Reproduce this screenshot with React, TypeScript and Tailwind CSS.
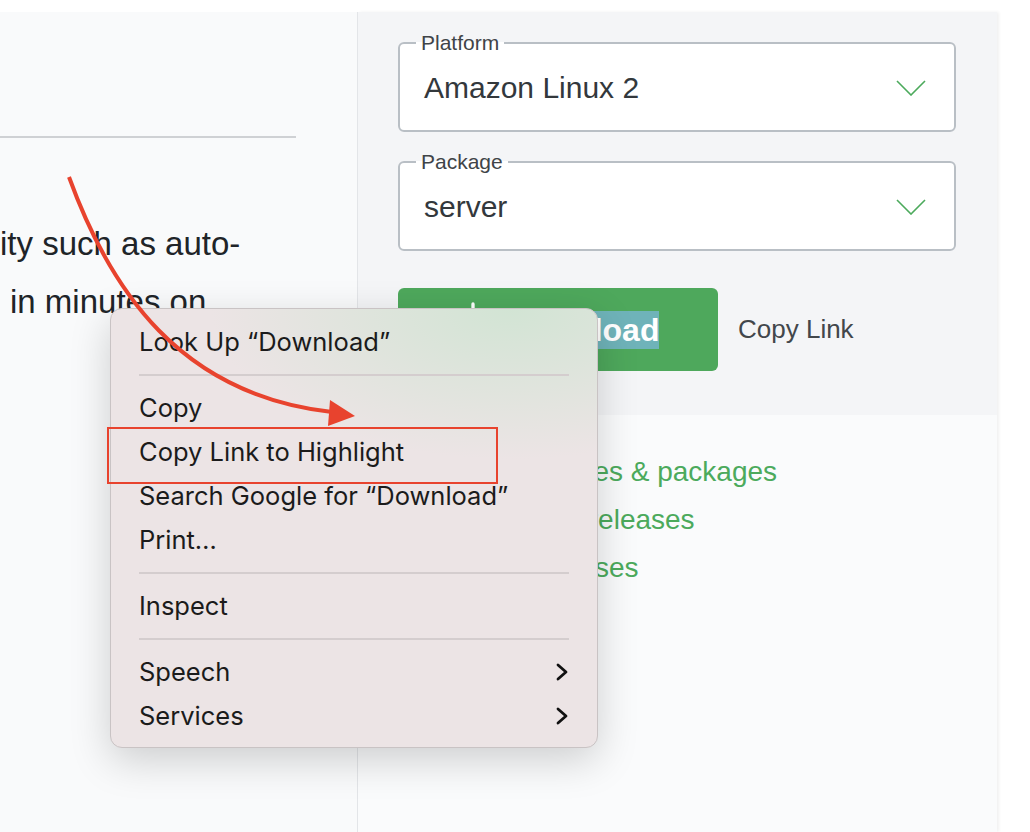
import { Download } from "lucide-react"

const sans = { fontFamily: '"Liberation Sans", Arial, sans-serif' }
const menuFont = { fontFamily: 'Inter, "Liberation Sans", sans-serif' }

function SelectBox({ label, value }: { label: string; value: string }) {
    return (
        <fieldset className="w-[558px] border-2 border-[#b9bfc5] rounded-[6px] bg-white px-[16px]">
            <legend className="px-[5px] text-[21px] leading-[21px] text-[#3f4448]">{label}</legend>
            <div className="h-[77px] flex items-center justify-between pb-[8px]">
                <span className="text-[30px] text-[#33383c] pl-[8px]">{value}</span>
                <svg width="30" height="16" viewBox="0 0 30 16" className="mr-[12px]">
                    <path d="M1 1 L15 15 L29 1" fill="none" stroke="#4caa5c" strokeWidth="1.6" />
                </svg>
            </div>
        </fieldset>
    )
}

function MenuItem({ text, sub }: { text: string; sub?: boolean }) {
    return (
        <div className="h-[44px] flex items-center justify-between px-[28px] text-[25.5px] text-[#1b1b1b]">
            <span>{text}</span>
            {sub && (
                <svg width="14" height="20" viewBox="0 0 14 20">
                    <path d="M3 3 L11 10 L3 17" fill="none" stroke="#111" strokeWidth="2.8" strokeLinecap="round" strokeLinejoin="round" />
                </svg>
            )}
        </div>
    )
}

const Sep = () => <div className="h-[22px] flex items-center px-[28px]"><div className="w-full h-[2px] bg-[#d4cdce]" /></div>

export default function App() {
    return (
        <main className="w-[1030px] h-[832px] bg-white pt-[12px] relative overflow-hidden" style={sans}>
            <div className="flex h-full">
                {/* left column */}
                <div className="w-[358px] h-full bg-[#f9fafb] border-r border-[#e3e5e8]">
                    <div className="h-[124px]" />
                    <div className="w-[296px] h-[2px] bg-[#cfd1d4]" />
                    <div className="pt-[77px] text-[33px] leading-[58px] text-[#202428]">
                        <p>ity such as auto-</p>
                        <p className="pl-[10px]">in minutes on</p>
                    </div>
                </div>

                {/* right column */}
                <div className="w-[639px] h-full flex flex-col shadow-[2px_0_3px_rgba(0,0,0,0.06)]">
                    <section className="bg-[#f4f5f7] pl-[40px] pt-[20px] pb-[44px] flex flex-col">
                        <SelectBox label="Platform" value="Amazon Linux 2" />
                        <div className="h-[19px]" />
                        <SelectBox label="Package" value="server" />
                        <div className="flex items-center mt-[37px]">
                            <button className="w-[320px] h-[83px] rounded-[6px] bg-[#4ea85c] text-white flex items-center justify-center gap-[12px] font-bold text-[32px]">
                                <Download size={32} strokeWidth={2.5} className="self-start mt-[12px]" />
                                <span>Down<span className="bg-[#6fb3b9] pl-[6px] leading-[38px] inline-block">load</span></span>
                            </button>
                            <span className="ml-[20px] text-[26px] text-[#42474b]">Copy Link</span>
                        </div>
                    </section>
                    <section className="flex-1 bg-[#fafbfc] pl-[58px] pt-[33px] text-[28px] leading-[48px] text-[#4caa5c]">
                        <p>Current releases &amp; packages</p>
                        <p>Development releases</p>
                        <p>Archived releases</p>
                    </section>
                </div>
            </div>

            {/* context menu */}
            <div
                className="absolute left-[110px] top-[308px] w-[488px] rounded-[12px] bg-[#ece4e5] bg-[radial-gradient(ellipse_300px_150px_at_400px_0px,#d2e4d4,#ece4e5)] border border-[#c9c3c4] shadow-[0_12px_40px_rgba(0,0,0,0.18)] pt-[11px] pb-[9px]"
                style={menuFont}
            >
                <MenuItem text="Look Up “Download”" />
                <Sep />
                <MenuItem text="Copy" />
                <MenuItem text="Copy Link to Highlight" />
                <MenuItem text="Search Google for “Download”" />
                <MenuItem text="Print…" />
                <Sep />
                <MenuItem text="Inspect" />
                <Sep />
                <MenuItem text="Speech" sub />
                <MenuItem text="Services" sub />
            </div>

            {/* annotations */}
            <div className="absolute left-[107px] top-[427px] w-[391px] h-[57px] border-2 border-[#e8432e]" />
            <svg className="absolute left-0 top-0" width="1030" height="832">
                <path d="M69 177 C 110 290, 180 395, 332 412" fill="none" stroke="#e8432e" strokeWidth="4" />
                <polygon points="330,400 355,416 328,426" fill="#e8432e" />
            </svg>
        </main>
    )
}
